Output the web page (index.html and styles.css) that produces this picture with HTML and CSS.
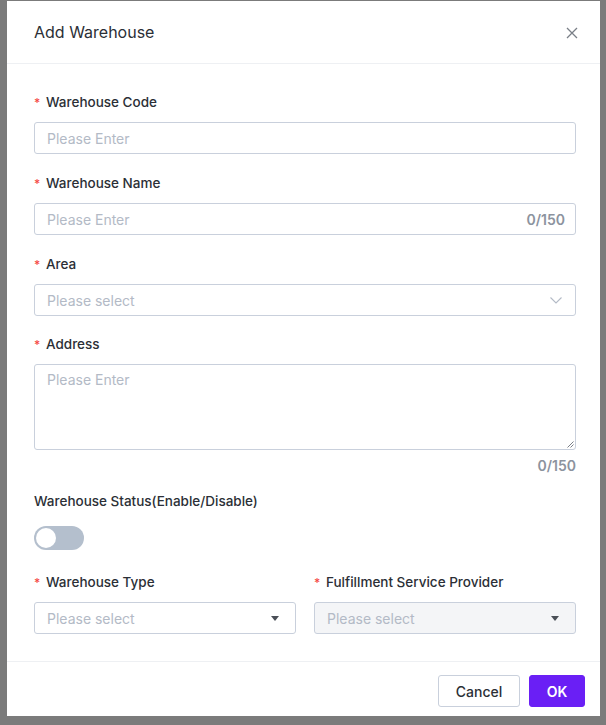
FILE: index.html
```html
<!DOCTYPE html>
<html>
<head>
<meta charset="utf-8">
<link rel="stylesheet" href="styles.css">
</head>
<body>
<div class="backdrop">
  <div class="modal">
    <div class="modal-header">
      <span class="title">Add Warehouse</span>
      <svg class="close" width="12" height="12" viewBox="0 0 12 12"><path d="M1 1L11 11M11 1L1 11" stroke="#7a7f87" stroke-width="1.3" fill="none"/></svg>
    </div>
    <div class="modal-body">
      <div class="item">
        <div class="label"><span class="req">*</span>Warehouse Code</div>
        <div class="control"><span class="ph">Please Enter</span></div>
      </div>
      <div class="item">
        <div class="label"><span class="req">*</span>Warehouse Name</div>
        <div class="control"><span class="ph">Please Enter</span><span class="count">0/150</span></div>
      </div>
      <div class="item item-area">
        <div class="label"><span class="req">*</span>Area</div>
        <div class="control"><span class="ph">Please select</span>
          <svg class="chev" width="12" height="7" viewBox="0 0 12 7"><path d="M0.5 0.5L6 6L11.5 0.5" stroke="#b3bac6" stroke-width="1.1" fill="none"/></svg>
        </div>
      </div>
      <div class="item item-address">
        <div class="label"><span class="req">*</span>Address</div>
        <div class="control textarea"><span class="ph">Please Enter</span>
          <svg class="grip" width="8" height="8" viewBox="0 0 8 8"><path d="M7.5 1.5L1.5 7.5M7.5 4.5L4.5 7.5" stroke="#7a7f87" stroke-width="1" fill="none"/></svg>
        </div>
        <div class="ta-count">0/150</div>
      </div>
      <div class="item item-status">
        <div class="label plain">Warehouse Status(Enable/Disable)</div>
        <div class="switch"><span class="knob"></span></div>
      </div>
      <div class="row">
        <div class="item last">
          <div class="label"><span class="req">*</span>Warehouse Type</div>
          <div class="control"><span class="ph">Please select</span>
            <svg class="tri" width="8" height="5" viewBox="0 0 8 5"><path d="M0 0H8L4 5Z" fill="#4a4f57"/></svg>
          </div>
        </div>
        <div class="item last">
          <div class="label"><span class="req">*</span>Fulfillment Service Provider</div>
          <div class="control disabled"><span class="ph">Please select</span>
            <svg class="tri" width="8" height="5" viewBox="0 0 8 5"><path d="M0 0H8L4 5Z" fill="#4a4f57"/></svg>
          </div>
        </div>
      </div>
    </div>
    <div class="modal-footer">
      <button class="btn btn-cancel">Cancel</button>
      <button class="btn btn-ok">OK</button>
    </div>
  </div>
</div>
</body>
</html>
```
FILE: styles.css
```css
* { box-sizing: border-box; }
html, body { margin: 0; padding: 0; }
body {
  font-family: Inter, "Noto Sans", sans-serif;
  background: #7b7b7b;
  width: 606px;
  height: 725px;
  overflow: hidden;
}
.backdrop {
  padding: 1px 6px 9px 7px;
}
.modal {
  background: #fff;
  height: 715px;
  display: flex;
  flex-direction: column;
}
.modal-header {
  height: 63px;
  border-bottom: 1px solid #eef0f3;
  display: flex;
  align-items: center;
  justify-content: space-between;
  padding: 0 22px 0 27px;
  flex-shrink: 0;
}
.title {
  font-size: 16px;
  color: #2b2f36;
  font-weight: 400;
}
.close { margin-top: 1px; }
.modal-body {
  padding: 28px 24px 0 27px;
  flex: 1;
}
.item { margin-bottom: 19px; }
.item-area { margin-bottom: 18px; }
.label {
  font-size: 13.5px;
  line-height: 20px;
  height: 20px;
  color: #2b2f36;
  font-weight: 500;
  margin-bottom: 10px;
  display: flex;
  align-items: center;
}
.req {
  color: #f54a45;
  font-size: 12px;
  width: 12px;
  margin-top: 2px;
}
.control {
  height: 32px;
  border: 1px solid #c9d0dc;
  border-radius: 3px;
  display: flex;
  align-items: center;
  padding: 0 10px 0 12px;
  position: relative;
}
.ph {
  font-size: 14px;
  color: #b3bac6;
  flex: 1;
}
.count {
  font-size: 14px;
  font-weight: 600;
  color: #8c939e;
}
.chev { margin-right: 3px; }
.textarea {
  height: 86px;
  align-items: flex-start;
  padding-top: 6px;
}
.grip { position: absolute; right: 1px; bottom: 1px; }
.ta-count {
  text-align: right;
  font-size: 14px;
  font-weight: 600;
  color: #8c939e;
  line-height: 20px;
  margin-top: 6px;
}
.item-address { margin-bottom: 15px; }
.item-status .label { margin-bottom: 15px; }
.item-status { margin-bottom: 22px; }
.switch {
  width: 50px;
  height: 24px;
  border-radius: 12px;
  background: #b4bfcd;
  position: relative;
}
.knob {
  position: absolute;
  left: 2px;
  top: 2px;
  width: 20px;
  height: 20px;
  border-radius: 50%;
  background: #fff;
}
.row {
  display: grid;
  grid-template-columns: 1fr 1fr;
  column-gap: 18px;
}
.item.last { margin-bottom: 0; }
.tri { margin-right: 6px; }
.disabled { background: #f4f5f7; }
.modal-footer {
  height: 55px;
  border-top: 1px solid #eef0f3;
  display: flex;
  justify-content: flex-end;
  align-items: flex-start;
  padding: 13px 15px 0 0;
  gap: 9px;
  flex-shrink: 0;
}
.btn {
  height: 32px;
  border-radius: 3px;
  font-family: Inter, "Noto Sans", sans-serif;
  font-size: 14px;
  font-weight: 500;
  cursor: pointer;
}
.btn-cancel {
  width: 82px;
  background: #fff;
  border: 1px solid #c9d0dc;
  color: #2b2f36;
}
.btn-ok {
  width: 56px;
  background: #6a1ff5;
  border: 1px solid #6a1ff5;
  color: #fff;
  font-weight: 600;
}
```
